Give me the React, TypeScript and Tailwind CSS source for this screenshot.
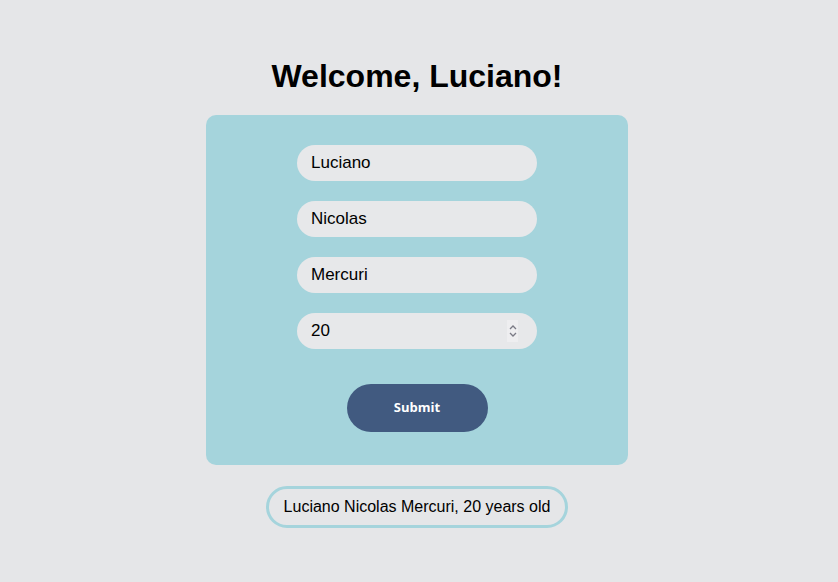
import { useState } from "react";

export default function App() {
    const [name, setName] = useState("Luciano");
    const [middle, setMiddle] = useState("Nicolas");
    const [last, setLast] = useState("Mercuri");
    const [age, setAge] = useState("20");

    const inputCls =
        "w-[240px] h-9 rounded-full bg-[#e7e8ea] pl-[14px] pr-[14px] text-[17px] text-black outline-none";

    return (
        <div
            className="min-h-screen w-full bg-[#e5e6e8] flex flex-col items-center pr-1"
            style={{ fontFamily: '"Liberation Sans", Arial, sans-serif' }}
        >
            {/* Heading */}
            <h1 className="mt-[52px] mb-[15px] text-[32px] leading-[48px] font-bold text-black">
                Welcome, {name}!
            </h1>

            {/* Form card */}
            <form
                className="w-[422px] rounded-[10px] bg-[#a5d4dc] pt-[30px] pb-[33px] flex flex-col items-center"
                onSubmit={(e) => e.preventDefault()}
            >
                <div className="flex flex-col gap-5">
                    <input className={inputCls} value={name} onChange={(e) => setName(e.target.value)} />
                    <input className={inputCls} value={middle} onChange={(e) => setMiddle(e.target.value)} />
                    <input className={inputCls} value={last} onChange={(e) => setLast(e.target.value)} />
                    <div className="relative">
                        <input
                            type="number"
                            className={`${inputCls} [appearance:textfield] [&::-webkit-inner-spin-button]:appearance-none [&::-webkit-outer-spin-button]:appearance-none`}
                            value={age}
                            onChange={(e) => setAge(e.target.value)}
                        />
                        {/* spinner */}
                        <div className="absolute right-[19px] top-[7px] w-[11px] h-[22px] bg-[#eeeef0] flex items-center justify-center pointer-events-none">
                            <svg width="8" height="14" viewBox="0 0 8 14" fill="none" stroke="#7a7a85" strokeWidth="1.3">
                                <path d="M1 5 L4 2 L7 5" />
                                <path d="M1 9 L4 12 L7 9" />
                            </svg>
                        </div>
                    </div>
                </div>
                <button
                    type="submit"
                    className="mt-[35px] w-[141px] h-12 rounded-[24px] bg-[#415a80] text-white text-[13px] font-bold"
                    style={{ fontFamily: '"Open Sans", sans-serif' }}
                >
                    Submit
                </button>
            </form>

            {/* Summary */}
            <div className="mt-[21px] h-[42px] px-[15px] rounded-full border-[3px] border-[#a5d4dc] flex items-center text-[16px] text-black">
                {name} {middle} {last}, {age} years old
            </div>
        </div>
    );
}
